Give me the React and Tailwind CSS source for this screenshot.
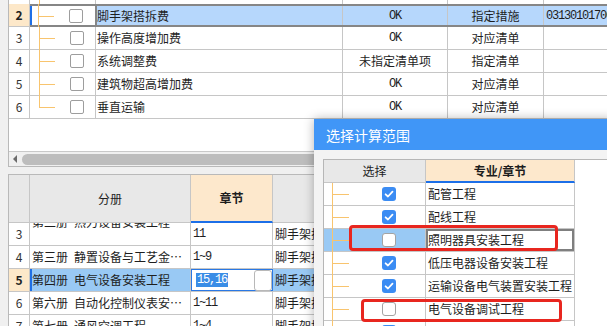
import React from "react";

const cjk = "font-['Noto_Sans_CJK_SC',sans-serif]";
const mono = "font-['Liberation_Mono',monospace] tracking-[-1.2px]";
const orange = "bg-[#f8c46e]";

const topRows = [
  { n: 3, name: "操作高度增加费", ok: "OK", kind: "对应清单" },
  { n: 4, name: "系统调整费", ok: "未指定清单项", kind: "指定清单" },
  { n: 5, name: "建筑物超高增加费", ok: "OK", kind: "对应清单" },
  { n: 6, name: "垂直运输", ok: "OK", kind: "对应清单", last: true },
];

const books = [
  { n: 3, name: "第二册 热力设备安装工程", ch: "11", clip: true },
  { n: 4, name: "第三册 静置设备与工艺金…", ch: "1~9" },
  { n: 5, name: "第四册 电气设备安装工程", ch: "15,16", active: true },
  { n: 6, name: "第六册 自动化控制仪表安…", ch: "1~11" },
  { n: 7, name: "第七册 通风空调工程", ch: "1~4" },
];

const scopes = [
  { name: "配管工程", on: true },
  { name: "配线工程", on: true },
  { name: "照明器具安装工程", on: false, current: true },
  { name: "低压电器设备安装工程", on: true },
  { name: "运输设备电气装置安装工程", on: true },
  { name: "电气设备调试工程", on: false },
  { name: "", on: true },
];

function Check({ on, small }) {
  if (on) {
    return (
      <span className="flex h-[14px] w-[14px] items-center justify-center rounded-[3px] bg-[#3b8cf3]">
        <svg width="10" height="10" viewBox="0 0 10 10">
          <path
            d="M1.6 5.3 L4 7.5 L8.5 2.7"
            fill="none"
            stroke="white"
            strokeWidth="1.8"
            strokeLinecap="round"
            strokeLinejoin="round"
          />
        </svg>
      </span>
    );
  }
  return small ? (
    <span className="block h-[14px] w-[14px] rounded-[2px] border border-[#9d9d9d] bg-white" />
  ) : (
    <span className="block h-[14px] w-[14px] rounded-[3px] border border-[#a3a3a3] bg-white" />
  );
}

// text with a half-width gap like the grid font
function Spaced({ text }) {
  return (
    <span className="flex whitespace-nowrap">
      {text.split(" ").map((part, i) => (
        <span key={i} className={i ? "ml-[6px]" : ""}>
          {part}
        </span>
      ))}
    </span>
  );
}

function TreeLines({ left, last, stub }) {
  return (
    <>
      <span
        className={`absolute top-0 w-px ${orange} ${last ? "h-1/2" : "-bottom-px"}`}
        style={{ left }}
      />
      <span className={`absolute top-1/2 h-px ${orange}`} style={{ left, width: stub }} />
    </>
  );
}

function TopGrid() {
  return (
    <section className="ml-[8px] flex h-[167px] flex-col border-b border-l border-[#b9b9b9] bg-white">
      <div className="h-[151px] overflow-hidden">
        {/* tail of row 1 */}
        <div className="flex h-[4px]">
          <div className="w-[21px] shrink-0 border-r border-[#c6c6c6]" />
          <div className="relative w-[66px] shrink-0 border-r border-[#c6c6c6]">
            <span className={`absolute left-[9px] top-0 h-full w-px ${orange}`} />
          </div>
          <div className="w-[247px] shrink-0 border-r border-[#c6c6c6]" />
          <div className="w-[105px] shrink-0 border-r border-[#c6c6c6]" />
          <div className="w-[96px] shrink-0 border-r border-[#c6c6c6]" />
        </div>

        {/* current row */}
        <div className="flex h-[23px]">
          <div className="flex w-[21px] shrink-0 items-center justify-center border-r border-b border-[#c6c6c6] bg-[#fde8c9] font-bold text-[#222]">
            2
          </div>
          <div className="flex min-w-0 flex-1 border-y-2 border-[#868686]">
            <div className="relative flex w-[67px] shrink-0 items-center border-r-2 border-[#868686] shadow-[inset_2px_0_0_#1f6fe5]">
              <span className={`absolute left-[8px] -top-[2px] -bottom-[2px] w-px ${orange}`} />
              <span className={`absolute left-[8px] top-1/2 h-px w-[16px] ${orange}`} />
              <span className="ml-[39px]">
                <Check small />
              </span>
            </div>
            <div className="flex w-[246px] shrink-0 items-center border-r border-[#c6c6c6] bg-[#b6d7fc]">
              脚手架搭拆费
            </div>
            <div className={`flex w-[105px] shrink-0 items-center justify-center border-r border-[#c6c6c6] bg-[#b6d7fc] ${mono}`}>
              OK
            </div>
            <div className="flex w-[96px] shrink-0 items-center justify-center border-r border-[#c6c6c6] bg-[#b6d7fc]">
              指定措施
            </div>
            <div className={`flex min-w-0 flex-1 items-center overflow-hidden whitespace-nowrap bg-[#b6d7fc] pl-[2px] ${mono}`}>
              031301017001
            </div>
          </div>
        </div>

        {topRows.map((r) => (
          <div key={r.n} className="flex h-[23px] border-b border-[#c6c6c6]">
            <div className="flex w-[21px] shrink-0 items-center justify-center border-r border-[#c6c6c6] text-[#333]">
              {r.n}
            </div>
            <div className="relative flex w-[66px] shrink-0 items-center border-r border-[#c6c6c6]">
              <TreeLines left={9} last={r.last} stub={16} />
              <span className="ml-[40px]">
                <Check small />
              </span>
            </div>
            <div className="flex w-[247px] shrink-0 items-center border-r border-[#c6c6c6] pl-[1px]">{r.name}</div>
            <div
              className={`flex w-[105px] shrink-0 items-center justify-center border-r border-[#c6c6c6] ${
                r.ok === "OK" ? mono : ""
              }`}
            >
              {r.ok}
            </div>
            <div className="flex w-[96px] shrink-0 items-center justify-center border-r border-[#c6c6c6]">{r.kind}</div>
            <div className="min-w-0 flex-1" />
          </div>
        ))}
      </div>

      <div className="flex h-[15px] items-center border-t border-[#c9c9c9] bg-[#f0f0f0]">
        <svg width="5" height="8" viewBox="0 0 5 8" className="ml-[4px]">
          <polygon points="4,0 4,8 0,4" fill="#6b6b6b" />
        </svg>
        <div className="ml-[4px] h-[11px] flex-1 rounded-full bg-[#bdbdbd]" />
      </div>
    </section>
  );
}

function BottomGrid() {
  return (
    <section className="ml-[8px] mt-[7px] border-l border-t border-[#b9b9b9] bg-white">
      <div className="flex h-[48px]">
        <div className="w-[21px] shrink-0 border-r border-b border-[#c6c6c6] bg-[#e8e8e8]" />
        <div className="flex w-[161px] shrink-0 items-center justify-center border-r border-b border-[#c6c6c6] bg-[#e8e8e8]">
          分册
        </div>
        <div className="flex w-[82px] shrink-0 items-center justify-center border-r border-[#c6c6c6] border-b-2 border-b-[#1c6fe8] bg-[#fde8cc] font-bold">
          章节
        </div>
        <div className="min-w-0 flex-1 border-b border-[#c6c6c6] bg-[#e8e8e8]" />
      </div>

      {books.map((b) => (
        <div key={b.n} className="flex h-[23px] border-b border-[#c6c6c6]">
          <div
            className={`flex w-[21px] shrink-0 items-center justify-center border-r border-[#c6c6c6] ${
              b.active ? "bg-[#fde8c9] font-bold text-[#222]" : "text-[#333]"
            }`}
          >
            {b.n}
          </div>
          <div
            className={`flex w-[161px] shrink-0 overflow-hidden border-r border-[#c6c6c6] pl-[2px] ${
              b.clip ? "items-start" : "items-center"
            } ${b.active ? "bg-[#99c9f4] shadow-[inset_2px_0_0_#1f6fe5]" : ""}`}
          >
            <span className={b.clip ? "-mt-[10px]" : ""}>
              <Spaced text={b.name} />
            </span>
          </div>
          {b.active ? (
            <div className="flex w-[82px] shrink-0 items-center border border-[#2a78e4]">
              <span className={`ml-[4px] bg-[#3a8de6] px-[1px] leading-[14px] text-white ${mono}`}>{b.ch}</span>
              <span className="ml-auto h-[21px] w-[18px] rounded-[3px] border border-[#b8b8b8] bg-white" />
            </div>
          ) : (
            <div className={`flex w-[82px] shrink-0 items-center border-r border-[#c6c6c6] pl-[2px] ${mono}`}>{b.ch}</div>
          )}
          <div
            className={`flex min-w-0 flex-1 items-center overflow-hidden whitespace-nowrap pl-[2px] ${
              b.active ? "bg-[#99c9f4]" : ""
            }`}
          >
            脚手架搭拆费
          </div>
        </div>
      ))}
    </section>
  );
}

function ScopeDialog() {
  return (
    <div className="absolute left-[314px] top-[119px] h-[230px] w-[300px] bg-[#f3f3f3] shadow-[0_0_10px_rgba(0,0,0,0.3)]">
      <div className="flex h-[31px] items-center bg-[#4096f7] pl-[12px] text-[14px] text-white">选择计算范围</div>
      <div className="ml-[9px] mt-[9px] h-[200px] border-l border-t border-[#b6b6b6] bg-white">
        <div className="flex h-[23px]">
          <div className="flex w-[102px] shrink-0 items-center justify-center border-r border-b border-[#c6c6c6] bg-[#e8e8e8]">
            选择
          </div>
          <div className="flex w-[149px] shrink-0 items-center justify-center border-r border-[#c6c6c6] border-b-2 border-b-[#1c6fe8] bg-[#fde8cc] font-bold">
            专业/章节
          </div>
        </div>
        {scopes.map((s, i) => (
          <div key={i} className="flex h-[23px]">
            <div
              className={`relative flex w-[102px] shrink-0 items-center border-r border-b border-[#c6c6c6] ${
                s.current ? "bg-[#99c9f4]" : ""
              }`}
            >
              <TreeLines left={8} stub={17} />
              <span className="ml-[58px]">
                <Check on={s.on} />
              </span>
            </div>
            <div
              className={`flex w-[149px] shrink-0 items-center whitespace-nowrap border-r border-b border-[#c6c6c6] pl-[2px] ${
                s.current ? "shadow-[inset_0_0_0_2px_#7f7f7f]" : ""
              }`}
            >
              {s.name}
            </div>
          </div>
        ))}
      </div>
    </div>
  );
}

export default function App() {
  return (
    <div className={`relative h-[326px] w-[607px] overflow-hidden bg-[#f0f0f0] text-[12px] leading-[18px] text-[#1e1e1e] ${cjk}`}>
      <TopGrid />
      <BottomGrid />
      <ScopeDialog />

      {/* red annotation boxes */}
      <div className="absolute left-[349px] top-[225px] h-[26px] w-[209px] rounded-[4px] border-[3px] border-[#e8261f]" />
      <div className="absolute left-[361px] top-[299px] h-[23px] w-[201px] rounded-[4px] border-[3px] border-[#e8261f]" />
    </div>
  );
}
